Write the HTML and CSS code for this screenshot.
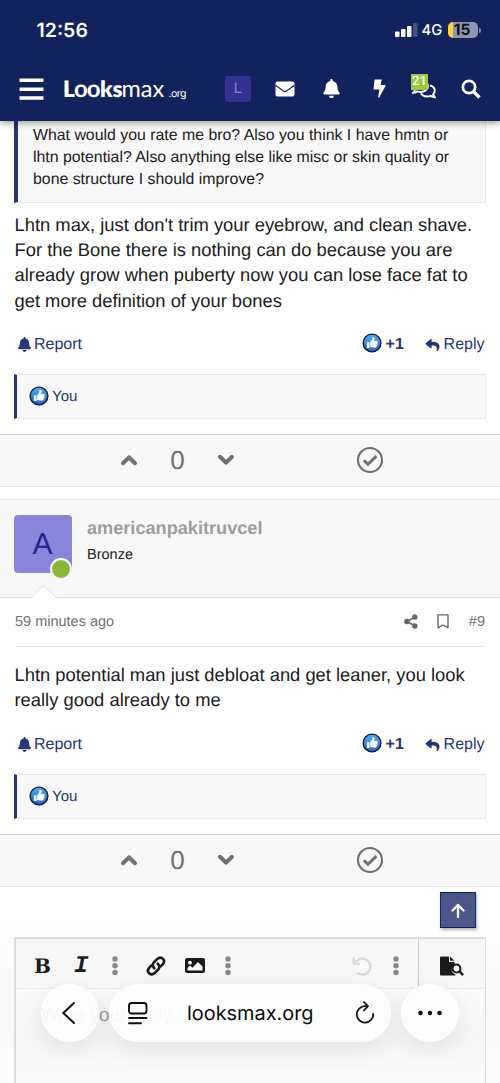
FILE: index.html
```html
<!DOCTYPE html>
<html lang="en">
<head>
<meta charset="utf-8">
<title>Looksmax.org</title>
<link rel="stylesheet" href="styles.css">
</head>
<body>
<svg class="sprite" aria-hidden="true">
  <defs><linearGradient id="blue" x1="0" y1="0" x2="0" y2="1"><stop offset="0" stop-color="#4fb0f2"/><stop offset="1" stop-color="#2263d0"/></linearGradient></defs>
  <symbol id="bell" viewBox="0 0 448 512"><path d="M224 512c35.320 0 63.970-28.650 63.970-64H160.030c0 35.350 28.650 64 63.970 64zm215.390-149.710c-19.320-20.760-55.470-51.990-55.470-154.290 0-77.700-54.480-139.900-127.940-155.160V32c0-17.670-14.320-32-31.980-32s-31.980 14.330-31.980 32v20.840C118.560 68.100 64.080 130.300 64.080 208c0 102.300-36.150 133.530-55.470 154.290-6 6.450-8.660 14.160-8.610 21.710.11 16.400 12.980 32 32.100 32h383.800c19.120 0 32-15.600 32.100-32 .05-7.550-2.610-15.270-8.610-21.710z"/></symbol>
  <symbol id="like" viewBox="0 0 20 20"><circle cx="10" cy="10" r="8.900" fill="url(#blue)" stroke="#101820" stroke-width="1.300"/><path fill="#fff" d="M4.900 9.200h2.600v5.800H4.900zM8.200 9.200l2-2.600.4-2.500c1.600-.2 2.100.8 1.900 2.100l-.4 1.800h2.500c.9 0 1.200.7.9 1.300.3.500.2 1-.1 1.300.2.500.1 1-.3 1.300.1.500-.1.900-.5 1.100 0 1-.5 1.500-1.300 1.500h-3c-.8 0-1.500-.3-2.100-.7z"/></symbol>
  <symbol id="reply" viewBox="0 0 512 512"><path d="M8.309 189.836L184.313 37.851C199.719 24.546 224 35.347 224 56.015v80.053c160.629 1.839 288 34.032 288 186.258 0 61.441-39.581 122.309-83.333 154.132-13.653 9.931-33.111-2.533-28.077-18.631 45.344-145.012-21.507-183.510-176.590-185.742V360c0 20.700-24.300 31.453-39.687 18.164l-176.004-152c-11.071-9.562-11.086-26.753 0-36.328z"/></symbol>
  <symbol id="up" viewBox="0 0 18 12"><path d="M3 9.200l6-5.800 6 5.800" fill="none" stroke="#707070" stroke-width="4" stroke-linecap="round" stroke-linejoin="round"/></symbol>
  <symbol id="check" viewBox="0 0 28 28"><circle cx="14" cy="14" r="12" fill="none" stroke="#707070" stroke-width="2.100"/><path d="M7.700 14.200l4.200 4 8.500-8.100" fill="none" stroke="#707070" stroke-width="2.900"/></symbol>
  <symbol id="dots" viewBox="0 0 6 20"><circle cx="3" cy="3" r="2.700"/><circle cx="3" cy="9.700" r="2.700"/><circle cx="3" cy="16.400" r="2.700"/></symbol>
</svg>

<header class="top">
  <div class="status">
    <span class="clock">12:56</span>
    <svg class="signal" viewBox="0 0 23 14"><rect x="0" y="8.500" width="4.500" height="5.500" rx="1"/><rect x="6" y="6" width="4.500" height="8" rx="1"/><rect x="12" y="3" width="4.500" height="11" rx="1"/><rect x="18" y="0" width="4.500" height="14" rx="1" opacity=".22"/></svg>
    <span class="net">4G</span>
    <span class="battery">15</span><i class="battery-tip"></i>
  </div>
  <nav class="nav">
    <svg class="menu" viewBox="0 0 24 22"><path d="M.5 2.200h23M.5 10.700h23M.5 19.200h23" stroke="#fff" stroke-width="3.300"/></svg>
    <svg class="logo" viewBox="0 0 124 32" fill="#fff"><text y="22"><tspan class="logo-bold" x="-1">L</tspan><tspan class="logo-oo" x="10">oo</tspan><tspan class="logo-bold" x="36">ks</tspan><tspan class="logo-thin" x="57.500">max</tspan><tspan class="logo-small" x="104.500">.org</tspan></text></svg>
    <span class="me">L</span>
    <svg class="mail" viewBox="0 0 20 16"><rect x=".5" y=".5" width="19" height="15" rx="2" fill="#fff"/><path d="M.5 4.200l8 5.800q1.500 1 3 0l8-5.800" fill="none" stroke="#12225c" stroke-width="1.100"/></svg>
    <svg class="nav-bell" fill="#fff"><use href="#bell"/></svg>
    <svg class="bolt" viewBox="0 0 13 19"><path d="M2.200.5h6.600L7.500 6h4.700q.8 0 .4.900L6.200 18.500H5l1.500-8H1.100q-.7 0-.6-.8L1.500 1.200q.1-.7.700-.7z" fill="#fff"/></svg>
    <span class="chat"><svg viewBox="0 0 24 20"><path d="M16 7c0 3.500-3.300 6-7.500 6-1.300 0-2.400-.2-3.400-.6-1.400 1-2.900 1.400-4.100 1.400 1-1 1.700-2 1.900-3C1.700 9.700 1 8.400 1 7c0-3.300 3.300-6 7.500-6S16 3.700 16 7zM18 6.300c2.900.8 4.800 2.900 4.800 5.300 0 1.400-.7 2.700-1.700 3.700.2 1 .9 2 1.700 2.900-1.500 0-3-.5-4.200-1.300-1 .4-2.200.6-3.300.6-2.800 0-5.300-1.200-6.500-3.200" fill="none" stroke="#fff" stroke-width="1.900"/></svg><b>21</b></span>
    <svg class="search" viewBox="0 0 20 20"><circle cx="8" cy="8" r="6.200" fill="none" stroke="#fff" stroke-width="2.700"/><path d="M12.500 12.500l6 6" stroke="#fff" stroke-width="3.300"/></svg>
  </nav>
</header>

<main>
  <blockquote class="quote">What would you rate me bro? Also you think I have hmtn or<br>lhtn potential? Also anything else like misc or skin quality or<br>bone structure I should improve?</blockquote>
  <div class="text">Lhtn max, just don't trim your eyebrow, and clean shave.<br>For the Bone there is nothing can do because you are<br>already grow when puberty now you can lose face fat to<br>get more definition of your bones</div>
  <div class="actions">
    <a class="report"><svg><use href="#bell"/></svg>Report</a>
    <a class="plus"><svg><use href="#like"/></svg>+1</a>
    <a class="reply"><svg><use href="#reply"/></svg>Reply</a>
  </div>
  <div class="reactions"><svg><use href="#like"/></svg>You</div>
  <div class="votes"><svg class="arrow"><use href="#up"/></svg><span>0</span><svg class="arrow down"><use href="#up"/></svg><svg class="check"><use href="#check"/></svg></div>

  <section class="user">
    <div class="avatar">A<i></i></div>
    <div class="who"><h4>americanpakitruvcel</h4><p>Bronze</p></div>
    <svg class="notch" viewBox="0 0 28 15"><path d="M0 14.700L13.500 1.200 27 14.700" fill="#fff" stroke="#dedede"/></svg>
  </section>
  <div class="meta">
    <span class="ago">59 minutes ago</span>
    <svg class="share" viewBox="0 0 14 15"><path d="M11 3L3 7.500l8 4.500" fill="none" stroke="#666" stroke-width="1.700"/><g fill="#666"><circle cx="10.800" cy="3" r="2.700"/><circle cx="2.900" cy="7.500" r="2.700"/><circle cx="10.800" cy="12" r="2.700"/></g></svg>
    <svg class="mark" viewBox="0 0 12 15"><path d="M1 .9h10v12.900L6 11 1 13.800z" fill="none" stroke="#666" stroke-width="1.400" stroke-linejoin="round"/></svg>
    <span>#9</span>
  </div>
  <div class="text second">Lhtn potential man just debloat and get leaner, you look<br>really good already to me</div>
  <div class="actions">
    <a class="report"><svg><use href="#bell"/></svg>Report</a>
    <a class="plus"><svg><use href="#like"/></svg>+1</a>
    <a class="reply"><svg><use href="#reply"/></svg>Reply</a>
  </div>
  <div class="reactions"><svg><use href="#like"/></svg>You</div>
  <div class="votes"><svg class="arrow"><use href="#up"/></svg><span>0</span><svg class="arrow down"><use href="#up"/></svg><svg class="check"><use href="#check"/></svg></div>

  <section class="composer">
    <div class="editor">
      <div class="tools">
        <b class="tool-b">B</b><i class="tool-i">I</i>
        <svg class="dots d1"><use href="#dots"/></svg>
        <svg class="link" viewBox="0 0 20 20"><g fill="none" stroke="#1b1b1b" stroke-width="2.700" stroke-linecap="round"><path d="M8.200 12.200c-2-2-1.800-4.300-.2-5.900l3.400-3.400c3.800-3.500 8.800 1.300 5.500 5.300l-2.200 2.200"/><path d="M11.800 7.800c2 2 1.800 4.300.2 5.900l-3.400 3.400c-3.800 3.500-8.800-1.300-5.500-5.300l2.200-2.200"/></g></svg>
        <svg class="image" viewBox="0 0 20 15"><rect width="20" height="15" rx="2" fill="#1b1b1b"/><circle cx="5" cy="4.700" r="1.900" fill="#f8f8f8"/><path d="M2.500 12.500V10L5 7.500 7.300 9.800 13 4l4.500 4.500v4z" fill="#f8f8f8"/></svg>
        <svg class="dots d2"><use href="#dots"/></svg>
        <svg class="undo" viewBox="0 0 20 20"><path d="M1.700 1.500v6.300H8M3 7.500A8 8 0 1 1 5 16.500" fill="none" stroke="#d9d9d9" stroke-width="2.300"/></svg>
        <svg class="dots d3"><use href="#dots"/></svg>
        <span class="preview"><svg viewBox="0 0 24 20"><path d="M1 .5h8V6h5.500v3c-3 1.700-3.600 5.500-1.300 8 .7.900 1.500 1.300 2.300 1.500v1H1q-1 0-1-1v-17Q0 .5 1 .5zM10 .5l4.500 4.300H10z" fill="#1b1b1b"/><circle cx="16.500" cy="12.500" r="3.900" fill="none" stroke="#1b1b1b" stroke-width="2"/><path d="M19.200 15.200l3.900 3.900" stroke="#1b1b1b" stroke-width="2.500"/></svg></span>
      </div>
      <div class="placeholder">Write your reply...</div>
    </div>
  </section>
</main>

<a class="to-top"><svg viewBox="0 0 14 15"><path d="M7 14V2M1.500 7.500L7 2l5.500 5.500" fill="none" stroke="#fff" stroke-width="2.300" stroke-linecap="round" stroke-linejoin="round"/></svg></a>

<footer class="browser">
  <span class="round"><svg class="back" viewBox="0 0 13 22"><path d="M12 1L1.300 11 12 21" fill="none" stroke="#111" stroke-width="2" stroke-linecap="round" stroke-linejoin="round"/></svg></span>
  <div class="address">
    <svg class="page" viewBox="0 0 20 23"><g fill="none" stroke="#111" stroke-width="1.900" stroke-linecap="round"><rect x="1" y="1" width="17.500" height="10.500" rx="2.500"/><path d="M1 16h17.500M1 21.200h12"/></g></svg>
    <span>looksmax.org</span>
    <svg class="reload" viewBox="0 0 20 23"><path d="M11.500 5.200H10A8.200 8.200 0 1 0 18.200 13M9 1.200l4 4-4 4.200" fill="none" stroke="#111" stroke-width="1.800" stroke-linecap="round" stroke-linejoin="round"/></svg>
  </div>
  <span class="round solid"><svg class="more" viewBox="0 0 24 6"><circle cx="2.500" cy="3" r="2.300"/><circle cx="12" cy="3" r="2.300"/><circle cx="21.500" cy="3" r="2.300"/></svg></span>
</footer>
</body>
</html>
```
FILE: styles.css
```css
* { box-sizing: border-box; margin: 0; }
svg { display: block; flex: none; }
body { height: 1083px; overflow: hidden; position: relative; background: #fff; color: #202020; font-family: "Liberation Sans", Arial, sans-serif; text-rendering: geometricPrecision; }
.sprite { position: absolute; width: 0; height: 0; }

.top { height: 121px; background: #12225c; position: relative; z-index: 2; box-shadow: 0 2px 7px rgba(0,0,0,.4); color: #fff; }
.status { height: 60px; display: flex; align-items: center; padding-left: 36.500px; font-family: Inter, sans-serif; }
.clock { width: 358px; font-size: 19.500px; font-weight: 600; }
.signal { width: 23px; height: 14px; fill: #fff; }
.net { margin-left: 4px; width: 26px; font-size: 14.800px; font-weight: 500; }
.battery { width: 30px; height: 16px; border-radius: 5px; background: linear-gradient(90deg, #fbd43d 4.500px, #8d95b2 4.500px); color: #101010; font: 700 15.500px/16px Inter, sans-serif; text-align: center; padding-right: 1px; }
.battery-tip { width: 2px; height: 5px; border-radius: 0 2px 2px 0; background: #8088a8; margin-left: 1px; }
.nav { height: 61px; display: flex; align-items: center; padding: 0 0 4px 19px; }
.menu { width: 25px; height: 23px; margin-top: 1px; }
.logo { width: 124px; height: 32px; margin-left: 20px; margin-top: 4px; }
.logo-bold { font: 800 22.500px Lato, sans-serif; }
.logo-oo { font: 700 24px Lato, sans-serif; letter-spacing: -1px; }
.logo-thin { font: 400 23.500px Lato, sans-serif; }
.logo-small { font: 400 10.500px Inter, sans-serif; letter-spacing: -.5px; }
.me { width: 26px; height: 26px; margin-left: 37px; background: #333191; border-radius: 2px; color: #8582d6; font: 15px/26px "Liberation Sans", sans-serif; text-align: center; }
.mail { width: 20px; height: 16px; margin-left: 24px; }
.nav-bell { width: 17px; height: 19px; margin-left: 28px; }
.bolt { width: 13px; height: 19px; margin-left: 33px; }
.chat { width: 24px; height: 20px; margin-left: 26px; position: relative; }
.chat svg { width: 24px; height: 20px; }
.chat b { position: absolute; left: -1px; top: -5px; width: 17px; height: 16px; background: #9cc93f; font: 500 13px/16px Roboto, sans-serif; text-align: center; }
.search { width: 20px; height: 20px; margin-left: 25px; }

.quote { margin: 0 14px; height: 81.500px; padding: 4px 0 0 15px; background: #f8f8f8; border: 1px solid #e8e8e8; border-top: 0; border-left: 4px solid #263672; font-size: 15.870px; line-height: 22px; white-space: nowrap; }
.text { margin: 9px 14px 0 14.500px; font-size: 18.380px; line-height: 25.350px; white-space: nowrap; height: 102px; }
.actions { height: 30px; margin: 15.500px 15.500px 0 18px; padding-top: 1px; display: flex; align-items: center; color: #263672; font-size: 16px; }
.actions a { display: flex; align-items: center; }
.report { flex: 1; gap: 3px; }
.report svg { width: 13px; height: 15px; margin-top: -1px; fill: #263672; }
.plus { font-weight: 700; gap: 4px; width: 62px; }
.plus svg, .reactions svg { width: 20px; height: 20px; }
.plus svg { margin: -4px 0 0 -1px; }
.reply { gap: 4px; }
.reply svg { width: 15px; height: 14px; fill: #263672; }
.reactions { margin: 14.500px 14px 15px; height: 45px; padding-left: 12px; display: flex; align-items: center; gap: 3px; background: #f8f8f8; border: 1px solid #eaeaea; border-left: 3px solid #263672; color: #263672; font-size: 15px; }
.votes { height: 53px; display: flex; align-items: center; padding-left: 120px; background: #f8f8f8; border-top: 1px solid #d8d8d8; border-bottom: 1px solid #e8e8e8; color: #707070; }
.votes span { width: 79px; text-align: center; font-size: 26px; padding-top: 1px; }
.arrow { width: 18px; height: 12px; }
.down { transform: rotate(180deg); }
.check { width: 28px; height: 28px; margin-left: 121px; }

.user { height: 98.500px; margin-top: 12.500px; padding: 15px 14px 0; display: flex; gap: 15px; background: #f8f8f8; border-top: 1px solid #e8e8e8; border-bottom: 1.500px solid #dedede; position: relative; }
.avatar { width: 58px; height: 58px; background: #8786da; border-radius: 4px; color: #26218c; font-size: 30px; line-height: 59px; text-align: center; position: relative; padding-right: 1px; }
.avatar i { position: absolute; left: 36px; top: 43px; width: 22px; height: 22px; border: 2px solid #f8f8f8; border-radius: 50%; background: #88b735; }
.who h4 { color: #9d9d9d; font-size: 18.150px; line-height: 24px; margin-top: 1px; }
.who p { font-size: 14.500px; line-height: 20px; margin-top: 5px; }
.notch { position: absolute; left: 30px; bottom: -2px; width: 28px; height: 15px; }
.meta { height: 49px; margin: 0 15px; display: flex; align-items: center; border-bottom: 1px solid #e6e6e6; color: #717171; font-size: 14.500px; }
.meta span { padding-top: 1px; }
.ago { flex: 1; }
.share { width: 14px; height: 15px; margin-right: 19px; }
.mark { width: 12px; height: 15px; margin-right: 20px; }
.second { margin-top: 15.500px; height: 51px; }
.second + .actions { margin-top: 16px; }

.composer { height: 197px; padding: 50.500px 14px 0; background: linear-gradient(#fff 30px, #f9f9f9 100px, #fcfcfc); }
.editor { height: 160px; border: 2px solid #ddd; border-right-width: 1px; background: linear-gradient(#fafafa 50px, #f5f5f5 100px, #fafafa 145px); }
.tools { height: 49.500px; display: flex; align-items: center; padding-left: 18px; background: #f7f7f7; border-bottom: 1px solid #ebebeb; color: #1b1b1b; padding-top: 5px; }
.tool-b { width: 40px; font: 700 20px/24px "DejaVu Serif", serif; }
.tool-i { width: 20px; padding-top: 2px; font: italic 700 24px/24px "Liberation Mono", monospace; }
.dots { width: 6px; height: 20px; fill: #888; }
.d1 { margin-left: 17.500px; }
.link { width: 20px; height: 20px; margin-left: 28px; }
.image { width: 20px; height: 15px; margin-left: 19px; }
.d2 { margin-left: 20.500px; }
.undo { width: 20px; height: 20px; margin-left: 121px; }
.d3 { margin-left: 21px; }
.preview { align-self: stretch; margin: -5px 0 0 auto; width: 67px; flex: none; border-left: 1px solid #ccc; display: flex; align-items: center; padding: 5px 0 0 21px; }
.preview svg { width: 24px; height: 20px; }
.placeholder { padding: 15px 0 0 25px; font-size: 18.800px; color: #999; }

.to-top { position: absolute; left: 440px; top: 892px; width: 36px; height: 36px; background: #4a5787; border: 1px solid #12225c; box-shadow: 1px 2px 3px rgba(0,0,0,.3); display: flex; align-items: center; justify-content: center; }
.to-top svg { width: 14px; height: 15px; }
.browser { position: absolute; left: 41px; top: 984px; width: 418px; height: 58px; display: flex; gap: 10px; }
.round, .address { background: rgba(253,253,253,.94); border-radius: 29px; box-shadow: 0 6px 26px rgba(0,0,0,.08); display: flex; align-items: center; }
.round { width: 58px; justify-content: center; border: 1px solid #fff; }
.solid { background: #fdfdfd; }
.back { width: 13px; height: 22px; margin-right: 4px; }
.address { flex: 1; padding-left: 19px; color: #0b0b0b; font: 19.900px Inter, sans-serif; }
.page { width: 20px; height: 23px; }
.address span { width: 168px; margin-left: 39px; }
.reload { width: 20px; height: 23px; margin-top: -2px; }
.more { width: 24px; height: 6px; fill: #111; }
```
